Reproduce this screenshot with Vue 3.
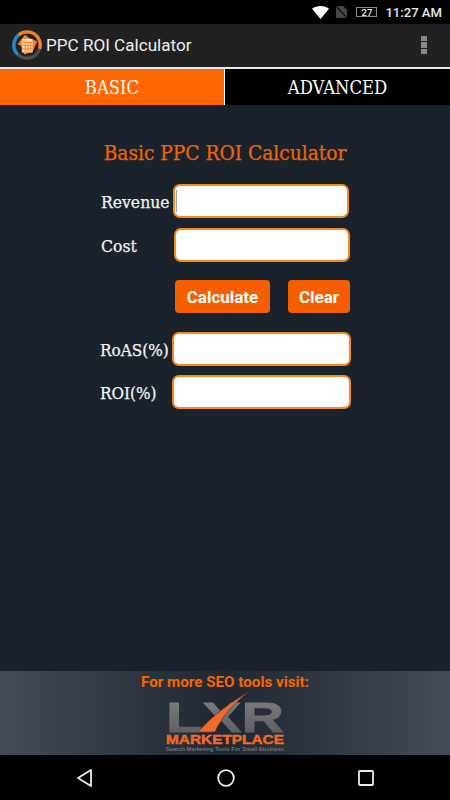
<template>
  <div class="phone">
    <div class="status-bar">
      <svg class="wifi" width="17" height="13" viewBox="0 0 17 13">
        <path d="M0 2.800C2.400 1 5.300 0 8.500 0s6.100 1 8.500 2.800L8.500 13z" fill="#fff" />
      </svg>
      <svg class="sim" width="11" height="12" viewBox="0 0 11 12">
        <path d="M0 0h7l4 4v8H0z" fill="#464646" />
        <path d="M0 0l11 12" stroke="#111" stroke-width="1.200" />
      </svg>
      <div class="battery"><span>27</span></div>
      <span class="time">11:27 AM</span>
    </div>

    <header class="toolbar">
      <svg class="app-icon" width="30" height="30" viewBox="0 0 32 32">
        <circle cx="16" cy="16" r="14" fill="none" stroke="#4f4f4f" stroke-width="3.500" />
        <path d="M7 5.300A14 14 0 0 1 29.500 20" fill="none" stroke="#f58220" stroke-width="3.500" />
        <path d="M7 5.300A14 14 0 0 0 6 26" fill="none" stroke="#2288cc" stroke-width="3.500" />
        <path d="M6 15L14 5l5 4 8 3-5 11-9 3-2-8z" fill="#f58220" />
        <rect x="10.500" y="9.500" width="11.500" height="14.500" fill="#fbd9b8" />
        <path d="M10.500 13h11.500M10.500 16.500h11.500M10.500 20h11.500M14 13v11M17 13v11M20 13v11" stroke="#f58220" stroke-width="1" />
      </svg>
      <span class="app-title">PPC ROI Calculator</span>
      <div class="overflow"><i></i><i></i><i></i></div>
    </header>

    <nav class="tabs">
      <div class="tab active">BASIC</div>
      <div class="tab">ADVANCED</div>
    </nav>

    <main class="content">
      <h1>Basic PPC ROI Calculator</h1>
      <div class="form">
        <div class="row">
          <label class="w-rev">Revenue</label>
          <div class="field focused"><span class="caret"></span></div>
        </div>
        <div class="row cost">
          <label class="w-cost">Cost</label>
          <div class="field"></div>
        </div>
        <div class="buttons">
          <button class="calc">Calculate</button>
          <button class="clear">Clear</button>
        </div>
        <div class="row result">
          <label class="w-res">RoAS(%)</label>
          <div class="field wide"></div>
        </div>
        <div class="row result second">
          <label class="w-res">ROI(%)</label>
          <div class="field wide"></div>
        </div>
      </div>
    </main>

    <footer class="ad">
      <div class="ad-text">For more SEO tools visit:</div>
      <svg class="logo" width="120" height="63" viewBox="0 0 120 63">
        <defs>
          <linearGradient id="steel" x1="0" y1="0" x2="0" y2="1">
            <stop offset="0" stop-color="#808285" />
            <stop offset="1" stop-color="#56595c" />
          </linearGradient>
        </defs>
        <text x="1" y="41" font-family="Liberation Sans" font-weight="700" font-size="43" fill="url(#steel)" stroke="url(#steel)" stroke-width=".8" textLength="118" lengthAdjust="spacingAndGlyphs">LXR</text>
        <path d="M85 0C70 11 56 26 50 41H33C48 24 66 11 85 0z" fill="#f26a2a" stroke="#2b3239" stroke-width=".5" />
        <text x="1" y="52.500" font-family="Liberation Sans" font-weight="700" font-size="12" fill="#f26a2a" stroke="#f26a2a" stroke-width=".4" textLength="118" lengthAdjust="spacingAndGlyphs">MARKETPLACE</text>
        <text x="1" y="59.500" font-family="Liberation Sans" font-weight="700" font-size="5.400" fill="#6f7478" textLength="118" lengthAdjust="spacingAndGlyphs">Search Marketing Tools For Small Business</text>
      </svg>
    </footer>

    <div class="nav-bar">
      <svg width="18" height="20" viewBox="0 0 18 20">
        <path d="M16 2v16L3 10z" fill="none" stroke="#ededed" stroke-width="1.800" stroke-linejoin="round" />
      </svg>
      <svg width="18" height="18" viewBox="0 0 18 18">
        <circle cx="9" cy="9" r="7.800" fill="none" stroke="#ededed" stroke-width="1.800" />
      </svg>
      <svg width="16" height="16" viewBox="0 0 16 16">
        <rect x="1" y="1" width="14" height="14" rx="1" fill="none" stroke="#ededed" stroke-width="1.800" />
      </svg>
    </div>
  </div>
</template>

<script setup>
</script>

<style>
html, body {
  margin: 0;
  background: #000;
}
</style>

<style scoped>
.phone {
  width: 450px;
  height: 800px;
  display: flex;
  flex-direction: column;
  overflow: hidden;
  font-family: Roboto, sans-serif;
  background: #1a232b;
}
.status-bar {
  height: 24px;
  flex: none;
  background: #000;
  display: flex;
  align-items: center;
  justify-content: flex-end;
  color: #e8e8e8;
}
.wifi {
  margin-right: 7px;
}
.sim {
  margin-right: 9px;
}
.battery {
  width: 21px;
  height: 10px;
  box-sizing: border-box;
  border: 1px solid #8c8c8c;
  display: flex;
  align-items: center;
  justify-content: center;
  margin-right: 8px;
  font-size: 9.500px;
  font-weight: 500;
}
.time {
  font-size: 13.100px;
  font-weight: 500;
  margin-right: 8px;
}
.toolbar {
  height: 42px;
  flex: none;
  background: #212121;
  display: flex;
  align-items: center;
  padding: 0 0 0 12px;
}
.app-title {
  margin-left: 4px;
  color: #eee;
  font-size: 17.100px;
}
.overflow {
  margin-left: auto;
  margin-right: 23px;
  display: flex;
  flex-direction: column;
  gap: 1px;
}
.overflow i {
  display: block;
  width: 6px;
  height: 5.500px;
  background: #888;
}
.tabs {
  flex: none;
  display: flex;
  height: 38px;
  box-sizing: border-box;
  border-top: 2px solid #e8e8e8;
  margin-top: 1px;
  background: #000;
  font-family: "DejaVu Serif Condensed", "DejaVu Serif", serif;
  font-size: 18.300px;
  color: #fff;
}
.tab {
  flex: 0 0 225px;
  box-sizing: border-box;
  display: flex;
  align-items: center;
  justify-content: center;
}
.tab.active {
  background: #ff6600;
  border-right: 1px solid #fff;
}
.content {
  flex: 1;
  padding-top: 35px;
  min-height: 0;
}
h1 {
  margin: 0;
  text-align: center;
  font-family: "DejaVu Serif Condensed", "DejaVu Serif", serif;
  font-weight: 400;
  font-size: 20.700px;
  line-height: 27px;
  color: #f2620a;
  -webkit-text-stroke: 0.25px #f2620a;
}
.form {
  padding-left: 101px;
  margin-top: 17px;
}
.row {
  display: flex;
  align-items: center;
}
.row label {
  font-family: "DejaVu Serif Condensed", "DejaVu Serif", serif;
  font-size: 17.400px;
  color: #f4f4f4;
  padding-top: 2px;
  -webkit-text-stroke: 0.25px #f4f4f4;
}
.w-rev {
  width: 72px;
}
.w-cost {
  width: 73px;
}
.w-res {
  width: 71px;
}
.row.result label {
  font-size: 17px;
  margin-left: -1px;
  margin-right: 1px;
}
.cost {
  margin-top: 10px;
}
.field {
  width: 176px;
  height: 34px;
  box-sizing: border-box;
  background: #fff;
  border: 2px solid #f7891f;
  border-radius: 7px;
  display: flex;
  align-items: center;
  padding-left: 1px;
}
.field.wide {
  width: 179px;
}
.caret {
  width: 1px;
  height: 22px;
  background: #9aa0a6;
}
.buttons {
  display: flex;
  gap: 18px;
  margin: 18px 0 0 74px;
}
button {
  height: 33px;
  border: none;
  border-radius: 4px;
  background: #f55f00;
  color: #fff;
  font-family: Roboto, sans-serif;
  font-weight: 700;
  font-size: 17px;
  padding: 0;
}
.calc {
  width: 95px;
}
.clear {
  width: 62px;
}
.result {
  margin-top: 19px;
}
.result.second {
  margin-top: 9px;
}
.ad {
  height: 84px;
  flex: none;
  box-sizing: border-box;
  padding-top: 2px;
  background: linear-gradient(to right, #434c54, #1f2830 50%, #434c54);
  display: flex;
  flex-direction: column;
  align-items: center;
  overflow: hidden;
}
.ad-text {
  color: #f96400;
  font-weight: 700;
  font-size: 15.200px;
  line-height: 18px;
}
.logo {
  flex: none;
}
.nav-bar {
  height: 45px;
  flex: none;
  background: #000;
  display: flex;
  align-items: center;
  justify-content: space-between;
  padding: 0 76px 0 75px;
}
</style>
